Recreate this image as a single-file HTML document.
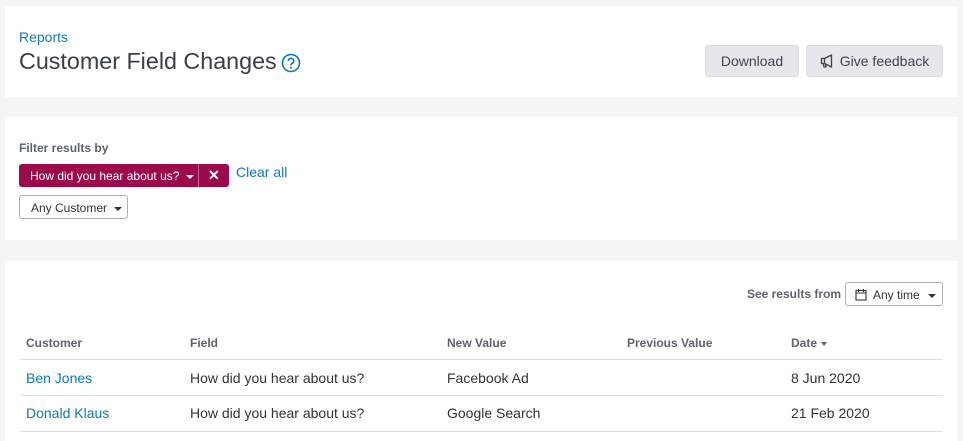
<!DOCTYPE html>
<html><head><meta charset="utf-8"><style>
*{box-sizing:border-box;margin:0;padding:0}
body{width:963px;height:437px;background:#f4f5f7;font-family:"Liberation Sans",Arial,sans-serif;position:relative;overflow:hidden;color:#333}
.p{position:absolute;left:5px;width:952px;background:#fff}
.a{position:absolute;white-space:nowrap}
.btn{position:absolute;background:#e5e7eb;border:1px solid #dcdfe3;border-radius:3px;font-size:14px;color:#3d4450;display:flex;align-items:center;justify-content:center}
.h{font-size:12px;font-weight:bold;color:#5d6470}
.line{position:absolute;left:20px;width:923px;height:1px;background:#dcdfe3}
.td{font-size:14px;color:#333}
.a.link{color:#0a7ab8}
.caret{display:inline-block;width:0;height:0;border-left:4px solid transparent;border-right:4px solid transparent;border-top:4px solid currentColor;vertical-align:middle}
</style></head><body>
<div class="p" style="top:6px;height:91px"></div>
<div class="p" style="top:117px;height:123px"></div>
<div class="p" style="top:261px;height:180px"></div>

<div class="a link" style="left:19px;top:29px;font-size:14px">Reports</div>
<div class="a" style="left:19px;top:48px;font-size:23.3px;color:#3a3f47">Customer Field Changes</div>
<svg class="a" style="left:281px;top:53px" width="20" height="20" viewBox="0 0 20 20"><circle cx="10" cy="10" r="8.5" fill="none" stroke="#0a7ab8" stroke-width="1.6"/><path d="M7.3 8a2.7 2.7 0 1 1 3.7 2.5c-.7.3-1 .8-1 1.5v.5" fill="none" stroke="#0a7ab8" stroke-width="1.6"/><circle cx="10" cy="14.6" r="1" fill="#0a7ab8"/></svg>

<div class="btn" style="left:705px;top:45px;width:94px;height:32px">Download</div>
<div class="btn" style="left:806px;top:45px;width:137px;height:32px"><svg width="16" height="14" viewBox="0 0 16 14" style="margin-right:4px"><path d="M1.5 4.5h3l7-3.5v12l-7-3.5h-3z M4.5 4.5v5 M3 9.5l1 3.5h2l-1-3.5" fill="none" stroke="#3d4450" stroke-width="1.3" stroke-linejoin="round"/></svg>Give feedback</div>

<div class="a h" style="left:19px;top:141px">Filter results by</div>
<div class="a" style="left:19px;top:164px;width:210px;height:23px;background:#9c0a4c;border-radius:3px;color:#fff;font-size:12px">
<span class="a" style="left:11px;top:5px">How did you hear about us? <span class="caret" style="margin-left:3px"></span></span>
<div class="a" style="left:179px;top:0;width:1px;height:23px;background:#c46a93"></div>
<span class="a" style="left:189px;top:3px;font-size:14px;font-weight:bold">✕</span>
</div>
<div class="a link" style="left:236px;top:164px;font-size:14px">Clear all</div>
<div class="a" style="left:19px;top:195px;width:109px;height:24px;border:1px solid #aab0b8;border-radius:3px;font-size:12px;color:#333;padding:5px 0 0 11px">Any Customer <span class="caret" style="margin-left:4px"></span></div>

<div class="a h" style="right:122px;top:287px">See results from</div>
<div class="a" style="left:845px;top:282px;width:98px;height:24px;border:1px solid #aab0b8;border-radius:3px;font-size:12px;color:#333;padding:5px 0 0 27px">Any time <span class="caret" style="margin-left:5px"></span>
<svg class="a" style="left:9px;top:5px" width="12" height="13" viewBox="0 0 12 13"><rect x="1" y="2.5" width="10" height="9.5" fill="none" stroke="#333" stroke-width="1.1"/><path d="M1 5h10M3.5 1v3M8.5 1v3" stroke="#333" stroke-width="1.1"/></svg></div>

<div class="a h" style="left:26px;top:336px">Customer</div>
<div class="a h" style="left:190px;top:336px">Field</div>
<div class="a h" style="left:447px;top:336px">New Value</div>
<div class="a h" style="left:627px;top:336px">Previous Value</div>
<div class="a h" style="left:791px;top:336px">Date <span class="caret" style="border-width:4px 3.5px 0;margin-left:1px"></span></div>
<div class="line" style="top:359px"></div>
<div class="a td link" style="left:26px;top:370px">Ben Jones</div>
<div class="a td" style="left:190px;top:370px">How did you hear about us?</div>
<div class="a td" style="left:447px;top:370px">Facebook Ad</div>
<div class="a td" style="left:791px;top:370px">8 Jun 2020</div>
<div class="line" style="top:395px"></div>
<div class="a td link" style="left:26px;top:405px">Donald Klaus</div>
<div class="a td" style="left:190px;top:405px">How did you hear about us?</div>
<div class="a td" style="left:447px;top:405px">Google Search</div>
<div class="a td" style="left:791px;top:405px">21 Feb 2020</div>
<div class="line" style="top:431px"></div>
</body></html>
